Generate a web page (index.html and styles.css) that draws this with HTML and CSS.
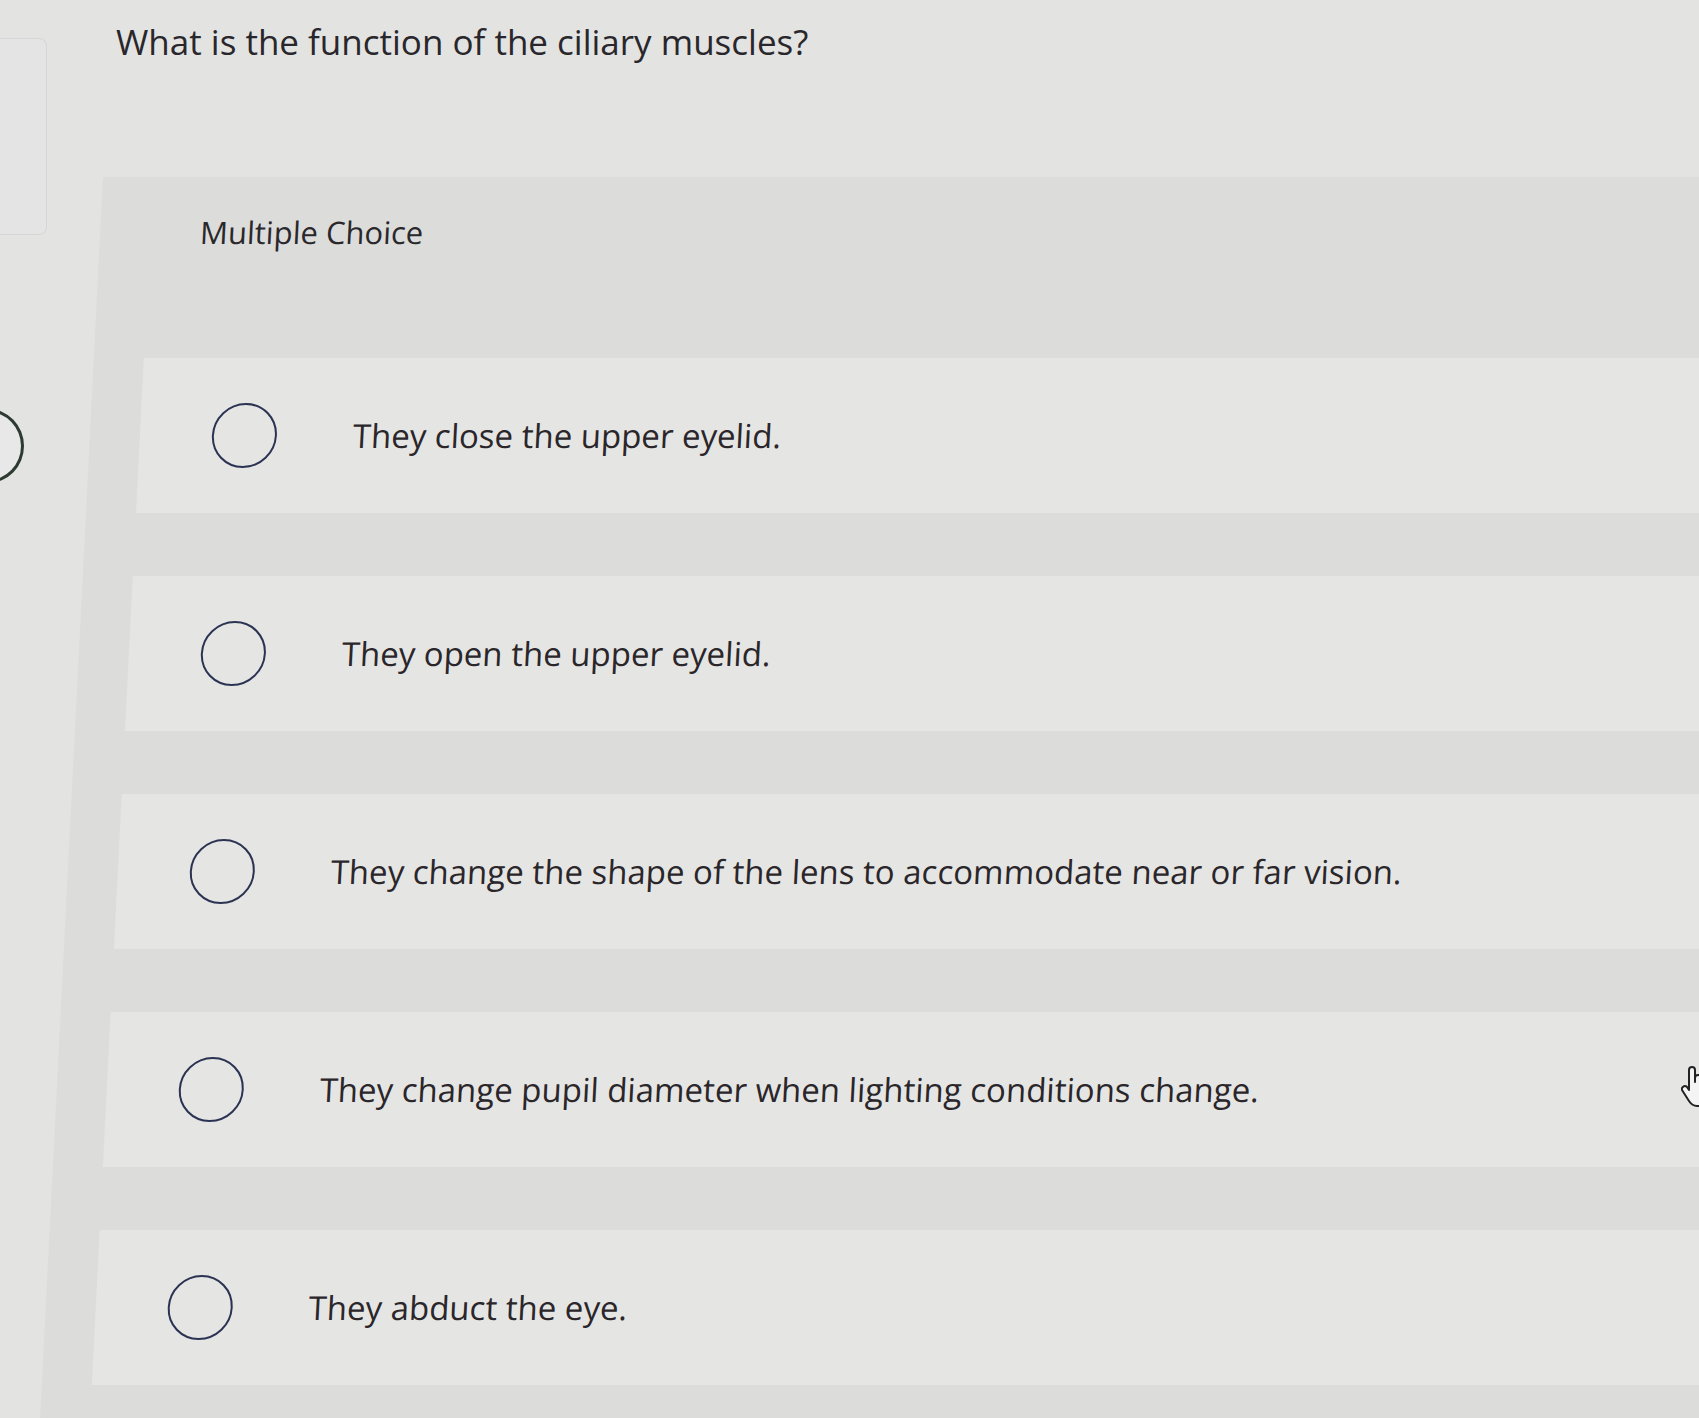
FILE: index.html
```html
<!DOCTYPE html>
<html lang="en">
<head>
<meta charset="utf-8">
<title>Multiple Choice</title>
<link rel="stylesheet" href="styles.css">
</head>
<body>
<div class="page">
  <aside class="rail">
    <div class="rail-box"></div>
    <div class="rail-btn"></div>
  </aside>
  <main class="main">
    <h1 class="question">What is the function of the ciliary muscles?</h1>
    <section class="panel">
      <div class="panel-head">Multiple Choice</div>
      <ul class="options">
        <li class="option"><span class="radio"></span><span class="label">They close the upper eyelid.</span></li>
        <li class="option"><span class="radio"></span><span class="label">They open the upper eyelid.</span></li>
        <li class="option"><span class="radio"></span><span class="label">They change the shape of the lens to accommodate near or far vision.</span></li>
        <li class="option"><span class="radio"></span><span class="label">They change pupil diameter when lighting conditions change.</span></li>
        <li class="option"><span class="radio"></span><span class="label">They abduct the eye.</span></li>
      </ul>
    </section>
  </main>
  <div class="cursor">
    <svg width="30" height="46" viewBox="0 0 30 46">
      <path d="M8 20 V6 a3 3 0 0 1 6 0 V18 V14 a3 3 0 0 1 6 0 V19 a3 3 0 0 1 6 0 V22 a3 3 0 0 1 6 0 V32 c0 6 -4 10 -10 10 h-6 c-4 0 -6 -2 -8 -5 l-7 -11 a3 3 0 0 1 5 -3 l2 3 Z" fill="#f4f4f4" stroke="#222" stroke-width="2" stroke-linejoin="round"/>
    </svg>
  </div>
</div>
</body>
</html>
```
FILE: styles.css
```css
html, body {
  margin: 0;
  padding: 0;
}
body {
  width: 1699px;
  height: 1418px;
  overflow: hidden;
  background: #e3e3e2;
  font-family: "Open Sans", "Lato", "Liberation Sans", sans-serif;
  color: #2f2b2f;
}
.page {
  position: relative;
  display: grid;
  grid-template-columns: 103px 1fr;
  height: 1418px;
}
.rail {
  display: flex;
  flex-direction: column;
  align-items: flex-start;
}
.rail-box {
  width: 46px;
  height: 195px;
  margin-top: 38px;
  border: 1.5px solid #d6d6d6;
  border-left: none;
  border-radius: 0 8px 8px 0;
  background: #e4e4e4;
}
.rail-btn {
  width: 66px;
  height: 68px;
  margin-top: 174px;
  margin-left: -48px;
  border: 3px solid #2d3a32;
  border-radius: 50%;
  background: #e8e8e8;
}
.main {
  min-width: 0;
}
.question {
  margin: 0;
  padding: 21px 0 0 13px;
  font-size: 35px;
  line-height: 42px;
  font-weight: 500;
  color: #29272b;
}
.panel {
  margin-top: 114px;
  width: calc(100% + 200px);
  background: #dcdcdb;
  transform: skewX(-2.9deg);
  transform-origin: 0 0;
  padding-bottom: 40px;
}
.panel-head {
  height: 110px;
  display: flex;
  align-items: center;
  padding-left: 100px;
  font-size: 31px;
  font-weight: 500;
  color: #2b282c;
}
.options {
  list-style: none;
  margin: 0;
  padding: 71px 0 0 50px;
  display: flex;
  flex-direction: column;
  gap: 63px;
}
.option {
  height: 155px;
  display: flex;
  align-items: center;
  padding-left: 72px;
  background: #e5e5e4;
}
.radio {
  flex: none;
  width: 61px;
  height: 61px;
  border: 2.5px solid #2b3352;
  border-radius: 50%;
  margin-right: 76px;
}
.label {
  font-size: 33px;
  font-weight: 500;
  color: #2a262a;
}
.cursor {
  position: absolute;
  right: -12px;
  top: 1064px;
}
```
